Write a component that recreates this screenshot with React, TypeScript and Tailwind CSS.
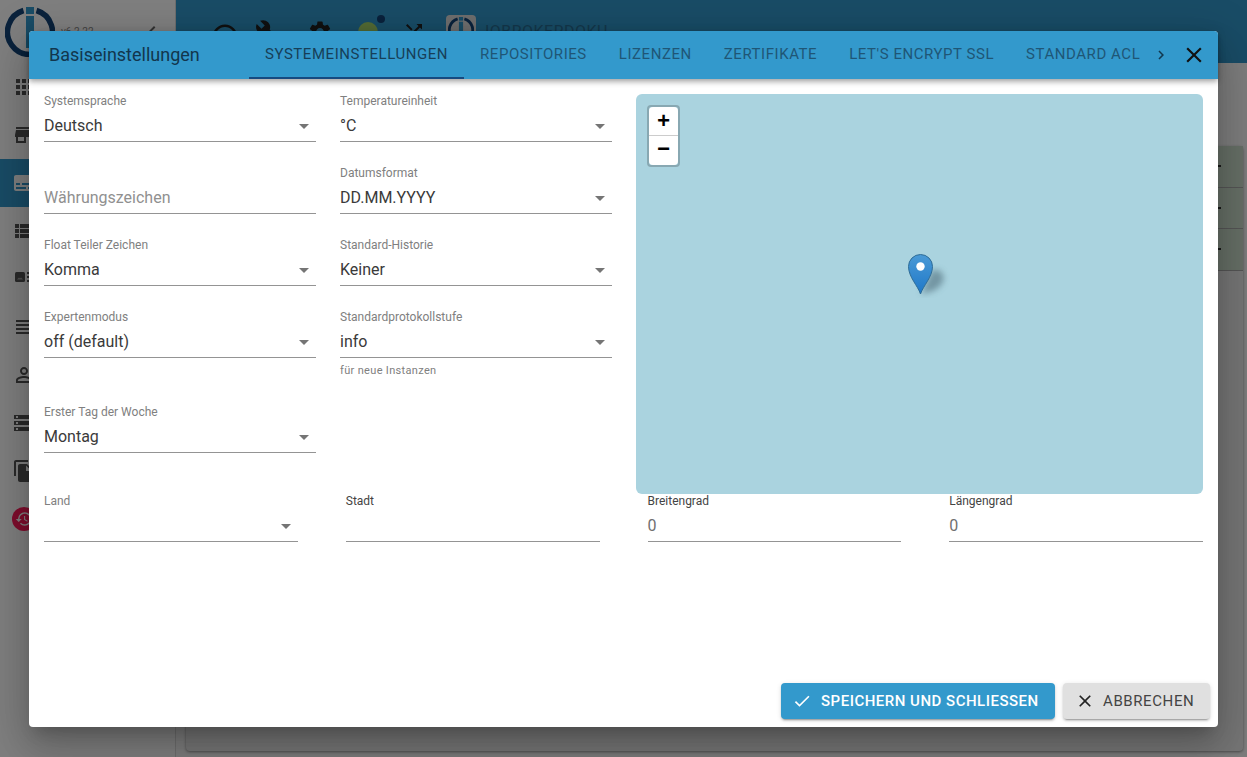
import { MdApps, MdStore, MdSubtitles, MdViewList, MdViewHeadline, MdPermIdentity, MdStorage, MdFileCopy, MdHistory, MdAdjust, MdBuild, MdSettings, MdChevronLeft, MdChevronRight, MdClose, MdCheck, MdShuffle } from 'react-icons/md';

const TABS = ['Systemeinstellungen', 'Repositories', 'Lizenzen', 'Zertifikate', "Let's Encrypt SSL", 'Standard ACL'];

function EnumsIcon({ className }: { className?: string }) {
  return (
    <svg viewBox="0 0 24 24" fill="currentColor" className={className}>
      <rect x="3" y="5" width="10" height="10" rx="1.5" />
      <path d="M5 12.5l2-2 1 1 1-1 2 2z" fill="#fff" opacity="0.5" />
      <rect x="15" y="5" width="6" height="2" />
      <rect x="15" y="9" width="6" height="2" />
      <rect x="15" y="13" width="6" height="2" />
    </svg>
  );
}

const NAV = [MdApps, MdStore, MdSubtitles, MdViewList, EnumsIcon, MdViewHeadline, MdPermIdentity, MdStorage, MdFileCopy];

function Logo({ size }: { size: number }) {
  return (
    <svg width={size} height={size} viewBox="0 0 50 50" className="shrink-0">
      <path d="M18.5 3.5a22.5 22.5 0 1 0 13 0" fill="none" stroke="#144578" strokeWidth="5.5" />
      <rect x="21" y="0" width="8" height="7" fill="#3399cc" />
      <rect x="21" y="9" width="8" height="32" fill="#3399cc" />
    </svg>
  );
}

function Arrow() {
  return (
    <svg viewBox="0 0 24 24" className="absolute right-0 top-[20px] h-6 w-6 fill-[#757575]">
      <path d="M7 10l5 5 5-5z" />
    </svg>
  );
}

function Field({ label, value, select, placeholder, helper, dark }: { label?: string; value?: string; select?: boolean; placeholder?: string; helper?: string; dark?: boolean }) {
  return (
    <div>
      <div className="h-[48px] border-b border-[#949494] relative">
        <div className={`h-[14px] text-[12px] leading-[14px] ${dark ? 'text-[#444]' : 'text-[#808080]'}`}>{label}</div>
        <div className={`h-[33px] pt-[8px] text-[16px] leading-[19px] ${placeholder ? 'text-[#909090]' : select ? 'text-[#3a3a3a]' : 'text-[#707070]'}`}>{placeholder || value}</div>
        {select && <Arrow />}
      </div>
      {helper && <div className="mt-[3px] h-[20px] text-[11px] leading-[20px] tracking-[0.03em] text-[#808080]">{helper}</div>}
    </div>
  );
}

function Marker() {
  return (
    <svg width="60" height="44" viewBox="0 0 60 44" className="absolute left-[272px] top-[160px]">
      <defs>
        <linearGradient id="pin" x1="0" y1="0" x2="0" y2="1">
          <stop offset="0" stopColor="#4a9ad6" />
          <stop offset="1" stopColor="#1f78c8" />
        </linearGradient>
        <filter id="blur" x="-50%" y="-50%" width="200%" height="200%">
          <feGaussianBlur stdDeviation="3" />
        </filter>
      </defs>
      <path d="M13 40 L24 16 Q34 14 36 24 Q34 34 22 38 Z" fill="#3d5a68" opacity="0.5" filter="url(#blur)" />
      <path d="M12.5 40 C10 32 .5 23 .5 12.5 A12 12 0 0 1 24.5 12.5 C24.5 23 15 32 12.5 40Z" fill="url(#pin)" stroke="#2e6c97" strokeWidth="1" />
      <circle cx="12.5" cy="12.5" r="4.2" fill="#fff" />
    </svg>
  );
}

function Background() {
  return (
    <div className="flex h-full">
      <div className="w-[176px] shrink-0 bg-white border-r border-[#ddd]">
        <div className="h-[63px] relative flex items-center pl-[5px]">
          <Logo size={50} />
          <span className="ml-[6px] text-[10px] text-[#888]">v6.2.22</span>
          <MdChevronLeft className="ml-[46px] text-[24px] text-[#666]" />
        </div>
        {NAV.map((Icon, i) => (
          <div key={i} className={`h-12 flex items-center pl-[12px] ${i === 2 ? 'bg-[#3399cc] text-white' : 'text-[#555]'}`}>
            <Icon className="h-6 w-6" />
          </div>
        ))}
        <div className="h-12 flex items-center pl-[12px]">
          <div className="h-[24px] w-[24px] rounded-full bg-[#ff1a5a] text-white flex items-center justify-center">
            <MdHistory className="text-[18px]" />
          </div>
        </div>
      </div>
      <div className="flex-1 flex flex-col bg-[#fafafa]">
        <div className="h-[63px] bg-[#3399cc] flex items-center pl-[34px] text-[#222] shrink-0">
          <MdAdjust className="mt-[10px] text-[30px]" />
          <MdBuild className="ml-[15px] text-[26px]" />
          <MdSettings className="ml-[26px] text-[26px]" />
          <div className="relative ml-[25px] h-[20px] w-[20px] rounded-full bg-[#a6d66a]">
            <span className="absolute right-[-7px] top-[-7px] h-2 w-2 rounded-full bg-[#144578]" />
          </div>
          <MdShuffle className="ml-[24px] text-[24px]" />
          <div className="ml-[20px] mt-[-3px] h-[30px] w-[30px] rounded bg-[#ddd] flex items-center justify-center">
            <Logo size={26} />
          </div>
          <span className="ml-[9px] text-[16px] tracking-[0.03em] text-[#2a6f96]">IOBROKERDOKU</span>
        </div>
        <div className="flex-1 pl-[10px] pr-[4px] pb-[6px] pt-[83px] flex flex-col">
          <div className="flex-1 bg-[#ececec] rounded shadow-[0_1px_3px_rgba(0,0,0,0.4)]">
            {[0, 1, 2].map((i) => (
              <div key={i} className="h-[41.5px] bg-[#ccdfcc] border-b border-[#aaa] flex items-center justify-end pr-[22px]">
                <span className="h-[2px] w-[3px] bg-[#333]" />
              </div>
            ))}
          </div>
        </div>
      </div>
    </div>
  );
}

export default function App() {
  return (
    <div className="relative h-screen w-full overflow-hidden font-['Roboto',sans-serif]">
      <Background />
      <div className="absolute inset-0 bg-black/50" />

      <div className="absolute left-[29px] top-[31px] w-[1189px] h-[696px] rounded bg-white flex flex-col shadow-[0_11px_15px_-7px_rgba(0,0,0,0.2),0_24px_38px_3px_rgba(0,0,0,0.14),0_9px_46px_8px_rgba(0,0,0,0.12)]">
        <div className="h-[48px] shrink-0 rounded-t bg-[#3399cc] flex items-stretch shadow-[0_2px_4px_-1px_rgba(0,0,0,0.2),0_4px_5px_0_rgba(0,0,0,0.14),0_1px_10px_0_rgba(0,0,0,0.12)] z-10">
          <div className="w-[220px] shrink-0 pl-[20px] text-[18px] leading-[47px] text-[#12364d]">Basiseinstellungen</div>
          <div className="flex flex-1 min-w-0 overflow-hidden">
            {TABS.map((t, i) => (
              <div key={t} className={`px-4 shrink-0 uppercase text-[15px] leading-[46px] tracking-[0.55px] border-b-2 ${i === 0 ? 'text-[#173f58] border-[#164a80]' : 'text-[#1f5676] border-transparent'}`}>
                {t}
              </div>
            ))}
          </div>
          <div className="w-[18px] shrink-0 flex items-center justify-center text-[#12384f]">
            <MdChevronRight className="text-[20px]" />
          </div>
          <div className="w-[48px] shrink-0 flex items-center justify-center text-[#111]">
            <MdClose className="text-[26px]" />
          </div>
        </div>

        <div className="flex-1 pl-[15px] pr-[15px] pt-[15px]">
          <div className="grid grid-cols-[272px_272px_567px] gap-x-[24px] h-[400px]">
            <div className="flex flex-col gap-[24px]">
              <Field label="Systemsprache" value="Deutsch" select />
              <Field placeholder="Währungszeichen" />
              <Field label="Float Teiler Zeichen" value="Komma" select />
              <div className="pb-[23px]">
                <Field label="Expertenmodus" value="off (default)" select />
              </div>
              <Field label="Erster Tag der Woche" value="Montag" select />
            </div>
            <div className="flex flex-col gap-[24px]">
              <Field label="Temperatureinheit" value="°C" select />
              <Field label="Datumsformat" value="DD.MM.YYYY" select />
              <Field label="Standard-Historie" value="Keiner" select />
              <Field label="Standardprotokollstufe" value="info" select helper="für neue Instanzen" />
            </div>
            <div className="relative rounded-md bg-[#aad3df]">
              <div className="absolute left-[11px] top-[11px] w-[33px] rounded border-2 border-black/20 bg-clip-padding">
                <div className="h-[29px] bg-white rounded-t-sm border-b border-[#ccc] text-center font-['Liberation_Mono',monospace] font-bold text-[22px] leading-[31px] text-black">+</div>
                <div className="h-[29px] bg-white rounded-b-sm text-center font-['Liberation_Mono',monospace] font-bold text-[22px] leading-[30px] text-black">−</div>
              </div>
              <Marker />
            </div>
          </div>
          <div className="grid grid-cols-4 gap-x-[48px]">
            <div className="relative">
              <Field label="Land" select />
            </div>
            <Field label="Stadt" dark />
            <Field label="Breitengrad" value="0" dark />
            <Field label="Längengrad" value="0" dark />
          </div>
        </div>

        <div className="flex justify-end gap-2 p-2">
          <button className="h-9 w-[274px] rounded bg-[#3399cc] text-white flex items-center pl-[11px] gap-[9px] text-[15px] font-medium uppercase tracking-[0.5px] shadow-[0_3px_1px_-2px_rgba(0,0,0,0.2),0_2px_2px_0_rgba(0,0,0,0.14),0_1px_5px_0_rgba(0,0,0,0.12)]">
            <MdCheck className="text-[20px]" />
            Speichern und schliessen
          </button>
          <button className="h-9 w-[147px] rounded bg-[#e0e0e0] text-[#444] flex items-center pl-[12px] gap-[8px] text-[15px] uppercase tracking-[0.6px] shadow-[0_3px_1px_-2px_rgba(0,0,0,0.2),0_2px_2px_0_rgba(0,0,0,0.14),0_1px_5px_0_rgba(0,0,0,0.12)]">
            <MdClose className="text-[20px] text-[#222]" />
            Abbrechen
          </button>
        </div>
      </div>
    </div>
  );
}
